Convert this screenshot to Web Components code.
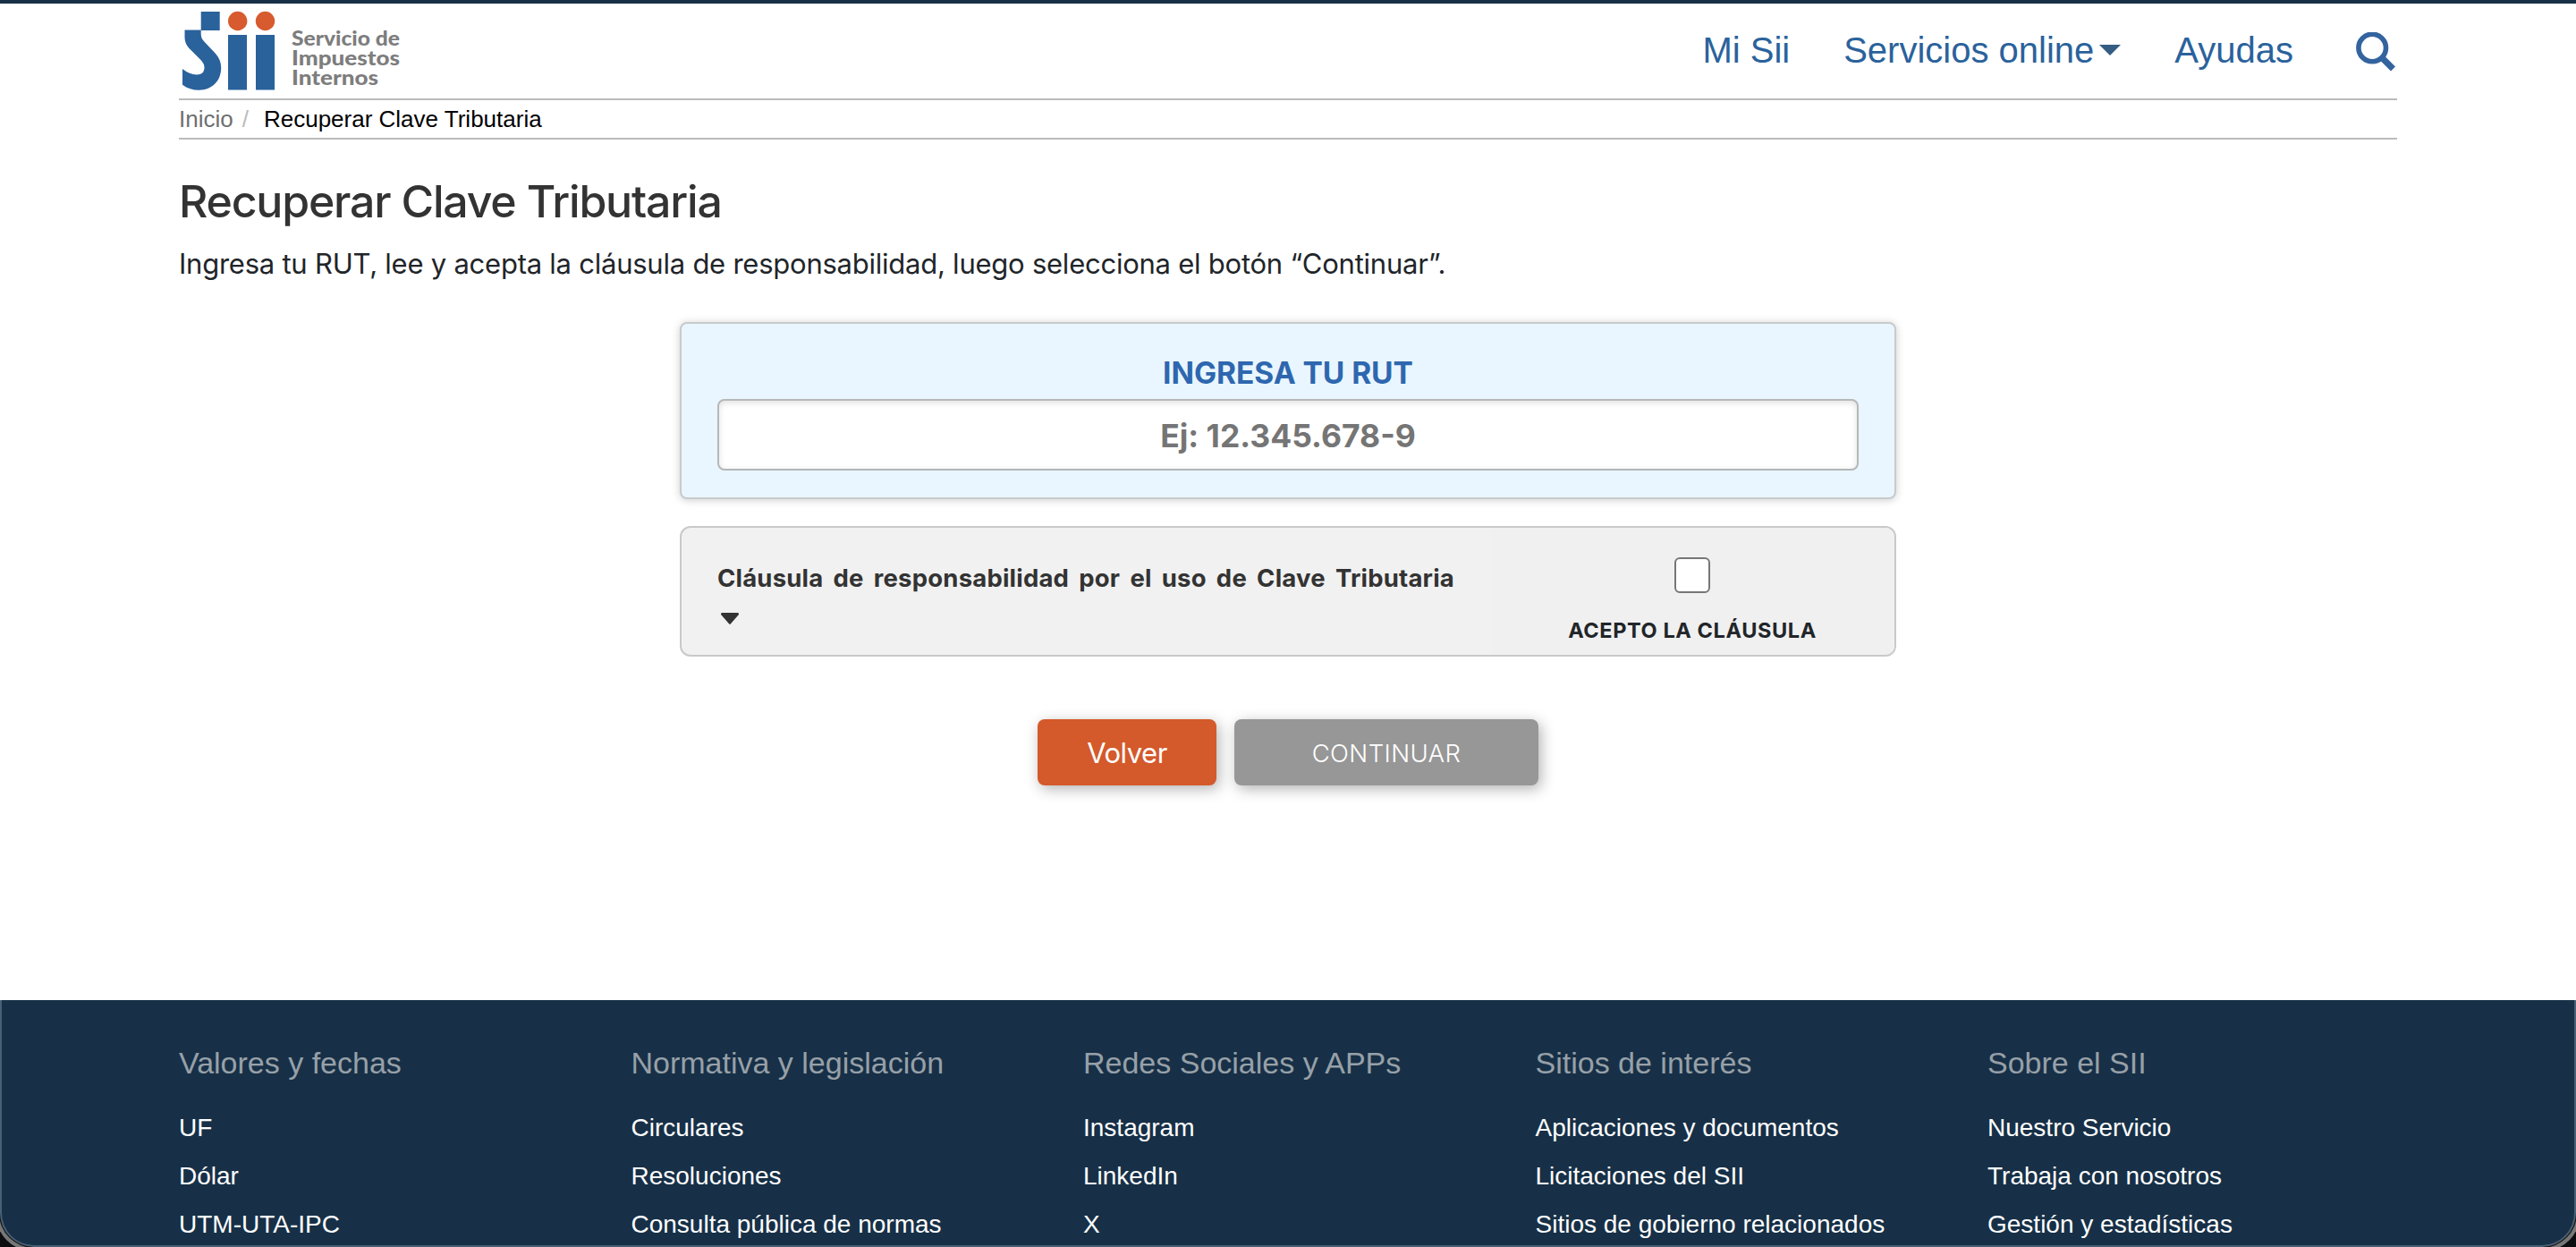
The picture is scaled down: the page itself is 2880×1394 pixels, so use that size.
<!DOCTYPE html>
<html lang="es">
<head>
<meta charset="utf-8">
<title>Recuperar Clave Tributaria</title>
<style>
  html { background: #0b0d0f; }
  body {
    margin: 0;
    height: 1394px;
    overflow: hidden;
    font-family: Inter, "Liberation Sans", sans-serif;
    color: #212529;
    --azul: #2a629c;
    --marino: #173047;
    --arial: "Liberation Sans", Arial, sans-serif;
  }
</style>
</head>
<body>

<sii-page>
  <sii-header slot="header">
    <sii-nav-item>Mi Sii</sii-nav-item>
    <sii-nav-item menu>Servicios online</sii-nav-item>
    <sii-nav-item>Ayudas</sii-nav-item>
  </sii-header>
  <sii-breadcrumb parent="Inicio">Recuperar Clave Tributaria</sii-breadcrumb>
  <sii-title>
    Recuperar Clave Tributaria
    <span slot="intro">Ingresa tu RUT, lee y acepta la cláusula de responsabilidad, luego selecciona el botón “Continuar”.</span>
  </sii-title>
  <rut-field label="INGRESA TU RUT" placeholder="Ej: 12.345.678-9"></rut-field>
  <clause-box accept="ACEPTO LA CLÁUSULA">Cláusula de responsabilidad por el uso de Clave Tributaria</clause-box>
  <sii-actions>
    <sii-button>Volver</sii-button>
    <sii-button kind="disabled">CONTINUAR</sii-button>
  </sii-actions>
  <sii-footer slot="footer">
    <footer-column heading="Valores y fechas" links="UF|Dólar|UTM-UTA-IPC"></footer-column>
    <footer-column heading="Normativa y legislación" links="Circulares|Resoluciones|Consulta pública de normas"></footer-column>
    <footer-column heading="Redes Sociales y APPs" links="Instagram|LinkedIn|X"></footer-column>
    <footer-column heading="Sitios de interés" links="Aplicaciones y documentos|Licitaciones del SII|Sitios de gobierno relacionados"></footer-column>
    <footer-column heading="Sobre el SII" links="Nuestro Servicio|Trabaja con nosotros|Gestión y estadísticas"></footer-column>
  </sii-footer>
</sii-page>

<script>
class SiiPage extends HTMLElement {
  connectedCallback() {
    const shadow = this.attachShadow({mode: "open"});
    shadow.innerHTML = `
      <style>
        :host {
          display: flex;
          flex-direction: column;
          height: 1394px;
        }
        main {
          flex: 1;
          padding: 0 200px;
          background: #fff;
        }
      </style>
      <slot name="header"></slot>
      <main><slot></slot></main>
      <slot name="footer"></slot>
    `;
  }
}

class SiiLogo extends HTMLElement {
  connectedCallback() {
    const shadow = this.attachShadow({mode: "open"});
    shadow.innerHTML = `
      <style>
        :host { display: block; width: 260px; height: 106px; }
        svg { display: block; }
        text { font: 900 22.500px Lato, sans-serif; fill: #7d7d7d; }
      </style>
      <svg width="260" height="106" viewBox="200 4 260 106">
        <g fill="#2a629c">
          <path d="M224.7 13h21v21h-21z"/>
          <path d="M206.5 33.5h18.2V38c0 4 1.500 6.500 4.500 9.500l11 11.500c4.500 5 7 10 7 17 0 15-11 24.700-24.500 24.700-7 0-13.500-2-18.700-6V77c5 4 10.500 6.500 16 6.500 5.500 0 8.500-3 8.500-8 0-4-2-6.500-5-9.500l-10-10c-5-5-7-9-7-15z"/>
          <path d="M255 39h21v61.500h-21zM286 39h21v61.500h-21z"/>
        </g>
        <circle cx="265.700" cy="23.500" r="10.700" fill="#d75b2f"/>
        <circle cx="296.500" cy="23.500" r="10.700" fill="#d75b2f"/>
        <text x="326" y="50.500" textLength="121" lengthAdjust="spacingAndGlyphs">Servicio de</text>
        <text x="326" y="72.500" textLength="121" lengthAdjust="spacingAndGlyphs">Impuestos</text>
        <text x="326" y="94.500" textLength="97" lengthAdjust="spacingAndGlyphs">Internos</text>
      </svg>
    `;
  }
}

class SiiHeader extends HTMLElement {
  connectedCallback() {
    const shadow = this.attachShadow({mode: "open"});
    shadow.innerHTML = `
      <style>
        :host {
          display: block;
          padding: 0 200px;
          background: #fff;
          border-top: 4px solid var(--marino);
        }
        header {
          display: flex;
          justify-content: space-between;
          align-items: center;
          height: 106px;
          border-bottom: 2px solid #bbb;
        }
        nav {
          display: flex;
          align-items: center;
          gap: 60px;
          padding-bottom: 2px;
        }
        .search { display: block; margin-left: 10px; padding: 4px 2px 0 0; }
      </style>
      <header>
        <sii-logo></sii-logo>
        <nav>
          <slot></slot>
          <svg class="search" width="44" height="44" viewBox="0 0 44 44" fill="none" stroke="#34649f">
            <circle cx="18.200" cy="17.500" r="15.300" stroke-width="5.600"/>
            <path d="M29 28.500L41.500 41" stroke-width="7"/>
          </svg>
        </nav>
      </header>
    `;
  }
}

class SiiNavItem extends HTMLElement {
  connectedCallback() {
    const shadow = this.attachShadow({mode: "open"});
    const caret = this.hasAttribute("menu")
      ? `<svg width="24" height="12" viewBox="0 0 24 12"><path d="M0 0h24L12 12z" fill="#355c82"/></svg>`
      : "";
    shadow.innerHTML = `
      <style>
        :host {
          display: flex;
          align-items: center;
          font: 40px/48px var(--arial);
          color: var(--azul);
        }
        svg { margin-left: 6px; }
      </style>
      <slot></slot>${caret}
    `;
  }
}

class SiiBreadcrumb extends HTMLElement {
  connectedCallback() {
    const shadow = this.attachShadow({mode: "open"});
    shadow.innerHTML = `
      <style>
        :host {
          display: flex;
          font: 26px/42px var(--arial);
          color: #000;
          border-bottom: 2px solid #bbb;
        }
        a { color: #6f6f6f; }
        i { font-style: normal; color: #bbb; margin: 0 17px 0 10px; }
      </style>
      <a>${this.getAttribute("parent")}</a><i>/</i><span><slot></slot></span>
    `;
  }
}

class SiiTitle extends HTMLElement {
  connectedCallback() {
    const shadow = this.attachShadow({mode: "open"});
    shadow.innerHTML = `
      <style>
        :host { display: block; }
        h1 {
          margin: 39px 0 0;
          font-size: 50px;
          line-height: 60px;
          font-weight: 500;
          letter-spacing: -1.200px;
          color: #333;
        }
        p {
          margin: 16px 0 0;
          font-size: 31px;
          line-height: 48px;
          letter-spacing: -.240px;
        }
      </style>
      <h1><slot></slot></h1>
      <p><slot name="intro"></slot></p>
    `;
  }
}

class RutField extends HTMLElement {
  connectedCallback() {
    const shadow = this.attachShadow({mode: "open"});
    shadow.innerHTML = `
      <style>
        :host {
          display: block;
          box-sizing: border-box;
          width: 1360px;
          height: 198px;
          margin: 41px auto 0;
          padding: 33px 40px 30px;
          background: #e9f6ff;
          border: 2px solid #c8cacc;
          border-radius: 8px;
          box-shadow: 0 1px 10px rgba(0, 0, 0, .2);
          text-align: center;
        }
        label {
          display: block;
          font-size: 33.500px;
          line-height: 44px;
          font-weight: 700;
          letter-spacing: -.05px;
          color: #2e67af;
        }
        input {
          display: block;
          box-sizing: border-box;
          width: 100%;
          height: 80px;
          margin: 7px 0 0;
          padding: 2px 0 0;
          border: 2px solid #b5b7b9;
          border-radius: 8px;
          background: #fff;
          box-shadow: inset 0 2px 7px rgba(0, 0, 0, .13);
          font: 700 35.500px Inter, sans-serif;
          text-align: center;
        }
        input::placeholder { color: #757575; }
      </style>
      <label><span>${this.getAttribute("label")}</span></label>
      <input type="text" placeholder="${this.getAttribute("placeholder")}">
    `;
  }
}

class ClauseBox extends HTMLElement {
  connectedCallback() {
    const shadow = this.attachShadow({mode: "open"});
    shadow.innerHTML = `
      <style>
        :host {
          display: flex;
          box-sizing: border-box;
          width: 1360px;
          height: 146px;
          margin: 30px auto 0;
          border: 2px solid #c9c9c9;
          border-radius: 12px;
          background: #f1f1f1;
          overflow: hidden;
        }
        .text {
          width: 824px;
          padding: 33px 42px 0 40px;
          font-size: 27.500px;
          line-height: 46px;
          font-weight: 700;
          letter-spacing: .2px;
          color: #333;
          text-align-last: justify;
        }
        .text svg { display: block; margin: 16px 0 0 4px; }
        .accept {
          flex: 1;
          display: flex;
          flex-direction: column;
          align-items: center;
          padding: 33px 2px 0 0;
          background: #f0f0f0;
        }
        input {
          appearance: none;
          box-sizing: border-box;
          width: 40px;
          height: 40px;
          margin: 0;
          border: 2px solid #767676;
          border-radius: 6px;
          background: #fff;
        }
        label {
          margin-top: 27px;
          font-size: 23.500px;
          line-height: 30px;
          font-weight: 700;
          letter-spacing: .6px;
        }
      </style>
      <div class="text">
        <slot></slot>
        <svg width="20" height="13" viewBox="0 0 20 13">
          <path d="M1.500 0h17c1.400 0 2 1.500 1 2.600L11 12.300c-.6.800-1.400.800-2 0L.5 2.600C-.5 1.500.1 0 1.500 0z" fill="#333"/>
        </svg>
      </div>
      <div class="accept">
        <input type="checkbox" id="ok">
        <label for="ok">${this.getAttribute("accept")}</label>
      </div>
    `;
  }
}

class SiiActions extends HTMLElement {
  connectedCallback() {
    const shadow = this.attachShadow({mode: "open"});
    shadow.innerHTML = `
      <style>
        :host {
          display: flex;
          justify-content: center;
          gap: 20px;
          margin-top: 70px;
        }
      </style>
      <slot></slot>
    `;
  }
}

class SiiButton extends HTMLElement {
  connectedCallback() {
    const shadow = this.attachShadow({mode: "open"});
    shadow.innerHTML = `
      <style>
        :host { display: block; }
        button {
          display: block;
          width: 200px;
          height: 74px;
          padding: 1px 0 0;
          border: 0;
          border-radius: 8px;
          background: #d4592b;
          box-shadow: 3px 4px 16px rgba(0, 0, 0, .3);
          font: 400 31px Inter, sans-serif;
          letter-spacing: -.5px;
          color: #fff;
        }
        :host([kind="disabled"]) button {
          width: 340px;
          background: #979797;
          font-size: 27.500px;
          font-weight: 350;
          letter-spacing: .4px;
        }
      </style>
      <button><slot></slot></button>
    `;
  }
}

class SiiFooter extends HTMLElement {
  connectedCallback() {
    const shadow = this.attachShadow({mode: "open"});
    shadow.innerHTML = `
      <style>
        :host {
          display: grid;
          grid-template-columns: repeat(5, 505.500px);
          box-sizing: border-box;
          height: 276px;
          padding: 50px 0 0 198px;
          background: var(--marino);
          border: 2px solid #4a5f74;
          border-top: 0;
          border-radius: 0 0 38px 38px;
          box-shadow: 0 0 0 1px #111, 0 0 0 5px #777;
          font-family: var(--arial);
          clip-path: inset(0 -10px -10px);
        }
      </style>
      <slot></slot>
    `;
  }
}

class FooterColumn extends HTMLElement {
  connectedCallback() {
    const shadow = this.attachShadow({mode: "open"});
    const links = this.getAttribute("links").split("|");
    shadow.innerHTML = `
      <style>
        :host { display: block; color: #fff; white-space: nowrap; }
        h2 {
          margin: 0 0 26px;
          font-size: 34px;
          line-height: 40px;
          font-weight: 400;
          color: #97a0a8;
        }
        ul { list-style: none; margin: 0; padding: 0; }
        li { font-size: 28px; line-height: 54px; }
      </style>
      <h2>${this.getAttribute("heading")}</h2>
      <ul>${links.map(l => `<li><a>${l}</a></li>`).join("")}</ul>
    `;
  }
}

customElements.define("sii-page", SiiPage);
customElements.define("sii-logo", SiiLogo);
customElements.define("sii-header", SiiHeader);
customElements.define("sii-nav-item", SiiNavItem);
customElements.define("sii-breadcrumb", SiiBreadcrumb);
customElements.define("sii-title", SiiTitle);
customElements.define("rut-field", RutField);
customElements.define("clause-box", ClauseBox);
customElements.define("sii-actions", SiiActions);
customElements.define("sii-button", SiiButton);
customElements.define("sii-footer", SiiFooter);
customElements.define("footer-column", FooterColumn);
</script>
</body>
</html>
